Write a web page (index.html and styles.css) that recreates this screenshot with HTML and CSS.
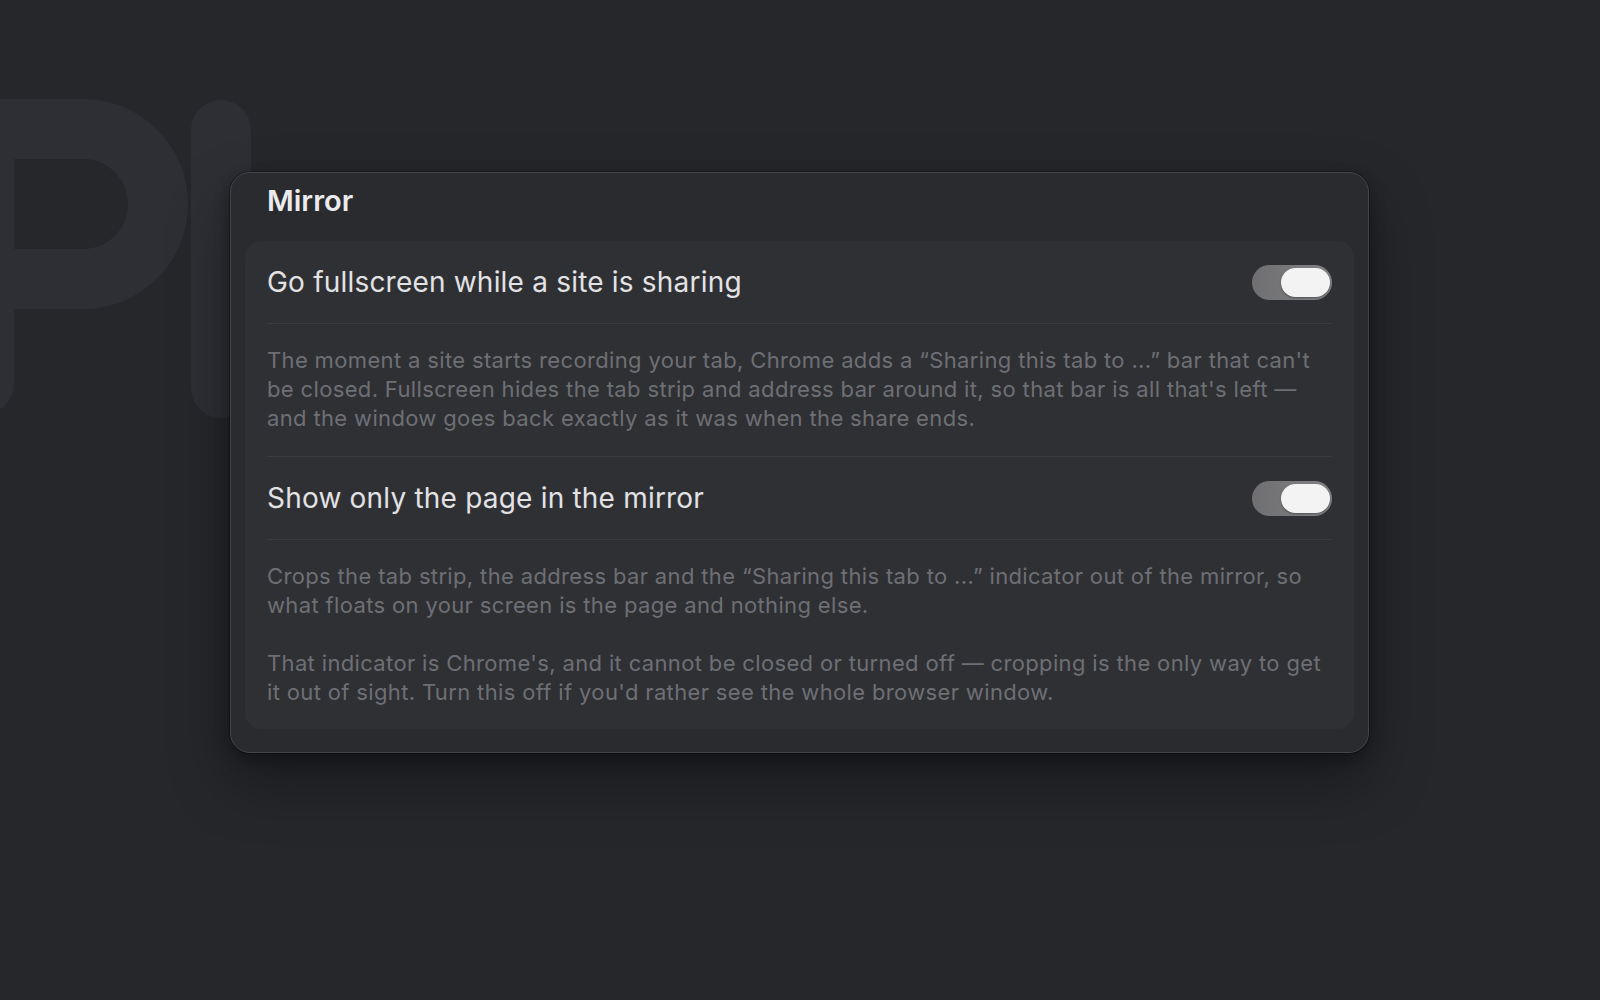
FILE: index.html
```html
<!DOCTYPE html>
<html lang="en">
<head>
<meta charset="utf-8">
<title>Mirror</title>
<link rel="stylesheet" href="styles.css">
</head>
<body>
<div class="stage">
  <svg class="logo" width="280" height="440" viewBox="0 0 280 440" aria-hidden="true">
    <path d="M -16 384 L -16 129 L 83 129 A 75 75 0 0 1 83 279 L -16 279" fill="none" stroke="#2e2f34" stroke-width="60" stroke-linecap="round" stroke-linejoin="round"/>
    <rect x="191" y="100" width="60" height="318" rx="30" fill="#2e2f34"/>
  </svg>

  <section class="panel">
    <h2 class="panel-title">Mirror</h2>
    <div class="card">
      <div class="row">
        <span class="row-label">Go fullscreen while a site is sharing</span>
        <span class="toggle on"><span class="knob"></span></span>
      </div>
      <div class="desc">
        <p>The moment a site starts recording your tab, Chrome adds a “Sharing this tab to ...” bar that can't<br>be closed. Fullscreen hides the tab strip and address bar around it, so that bar is all that's left —<br>and the window goes back exactly as it was when the share ends.</p>
      </div>
      <div class="row">
        <span class="row-label">Show only the page in the mirror</span>
        <span class="toggle on"><span class="knob"></span></span>
      </div>
      <div class="desc last">
        <p>Crops the tab strip, the address bar and the “Sharing this tab to ...” indicator out of the mirror, so<br>what floats on your screen is the page and nothing else.</p>
        <p>That indicator is Chrome's, and it cannot be closed or turned off — cropping is the only way to get<br>it out of sight. Turn this off if you'd rather see the whole browser window.</p>
      </div>
    </div>
  </section>
</div>
</body>
</html>
```

FILE: styles.css
```css
html, body {
  margin: 0;
  padding: 0;
}
body {
  background: #26272b;
  font-family: Inter, "Noto Sans", "Liberation Sans", sans-serif;
  width: 1600px;
  height: 1000px;
  overflow: hidden;
}
.stage {
  position: relative;
  width: 1600px;
  height: 1000px;
  padding-top: 172px;
  box-sizing: border-box;
}
.logo {
  position: absolute;
  left: 0;
  top: 0;
}
.panel {
  position: relative;
  margin-left: 230px;
  width: 1139px;
  box-sizing: border-box;
  background: #2a2b2f;
  border: 1px solid #44454a;
  border-radius: 20px;
  padding: 12px 14px 23px 14px;
  box-shadow: 0 6px 16px rgba(0, 0, 0, 0.3), 0 28px 60px rgba(0, 0, 0, 0.35), 0 0 0 1px rgba(0, 0, 0, 0.3);
}
.panel-title {
  margin: 0 0 24px 0;
  padding-left: 22px;
  font-size: 29px;
  line-height: 32px;
  font-weight: 600;
  color: #ebebee;
  letter-spacing: 0;
}
.card {
  background: #2f3034;
  border-radius: 16px;
  padding: 0 22px;
}
.row {
  height: 82px;
  display: flex;
  align-items: center;
  justify-content: space-between;
  border-bottom: 1px solid #3a3b40;
}
.row-label {
  font-size: 28px;
  color: #e2e2e5;
  letter-spacing: 0.2px;
}
.toggle {
  position: relative;
  width: 80px;
  height: 35px;
  border-radius: 18px;
  background: linear-gradient(90deg, #6f6f72 0%, #828285 100%);
}
.knob {
  position: absolute;
  right: 2px;
  top: 3px;
  width: 49px;
  height: 29px;
  border-radius: 15px;
  background: #f3f3f4;
  box-shadow: 0 1px 2px rgba(0, 0, 0, 0.35);
}
.desc {
  padding: 22px 0 23px 0;
  border-bottom: 1px solid #3a3b40;
  font-size: 22px;
  line-height: 29px;
  letter-spacing: 0.35px;
  color: #6e6f74;
}
.desc.last {
  border-bottom: none;
  padding-bottom: 22px;
}
.desc p {
  margin: 0 0 29px 0;
}
.desc p:last-child {
  margin-bottom: 0;
}
```
